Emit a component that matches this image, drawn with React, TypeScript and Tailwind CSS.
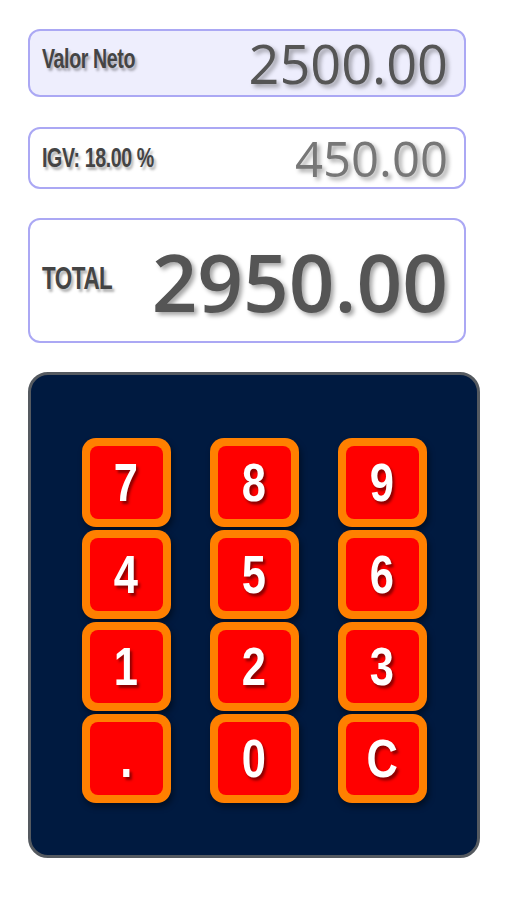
const sans = { fontFamily: '"Liberation Sans", Arial, sans-serif' };
const digits = { fontFamily: '"Open Sans", "DejaVu Sans", sans-serif' };

const keys = ["7", "8", "9", "4", "5", "6", "1", "2", "3", ".", "0", "C"];

function Key({ label }: { label: string }) {
  return (
    <div className="h-[89px] w-[89px] rounded-[14px] bg-[#ff8000] p-[8px] shadow-[2px_4px_6px_rgba(0,0,0,0.45)]">
      <div className="flex h-full w-full items-center justify-center rounded-[8px] bg-[#ff0000]">
        <span
          className="inline-block scale-x-[0.82] text-[53px] font-bold leading-none text-white [text-shadow:3px_3px_3px_rgba(110,0,0,0.8)]"
          style={sans}
        >
          {label}
        </span>
      </div>
    </div>
  );
}

export default function App() {
  return (
    <div className="flex w-[507px] flex-col bg-white pb-[42px] pl-[28px] pt-[29px]">
      {/* Valor neto */}
      <div className="flex h-[68px] w-[438px] items-center justify-between rounded-[12px] border-2 border-[#aba8f4] bg-[#eeeefd] pl-[12px] pr-[16px]">
        <span
          className="-mt-[8px] inline-block origin-left scale-x-[0.7] whitespace-nowrap text-[28px] font-bold tracking-[-0.02em] text-[#444] [text-shadow:3px_3px_3px_rgba(0,0,0,0.3)]"
          style={sans}
        >
          Valor Neto
        </span>
        <span
          className="text-[54px] font-medium leading-none text-[#555] [text-shadow:3px_3px_4px_rgba(0,0,0,0.35)]"
          style={digits}
        >
          2500.00
        </span>
      </div>

      {/* IGV */}
      <div className="mt-[30px] flex h-[62px] w-[438px] items-center justify-between rounded-[12px] border-2 border-[#aba8f4] bg-white pl-[12px] pr-[16px]">
        <span
          className="inline-block origin-left scale-x-[0.7] whitespace-nowrap text-[28px] font-bold tracking-[-0.02em] text-[#444] [text-shadow:3px_3px_3px_rgba(0,0,0,0.3)]"
          style={sans}
        >
          IGV: 18.00 %
        </span>
        <span
          className="text-[49px] font-medium leading-none text-[#777] [text-shadow:3px_3px_4px_rgba(0,0,0,0.35)]"
          style={digits}
        >
          450.00
        </span>
      </div>

      {/* Total */}
      <div className="mt-[29px] flex h-[125px] w-[438px] items-center justify-between rounded-[12px] border-2 border-[#aba8f4] bg-white pl-[12px] pr-[16px]">
        <span
          className="-mt-[6px] inline-block origin-left scale-x-[0.7] whitespace-nowrap text-[32px] font-bold tracking-[-0.02em] text-[#444] [text-shadow:3px_3px_3px_rgba(0,0,0,0.3)]"
          style={sans}
        >
          TOTAL
        </span>
        <span
          className="text-[80px] font-semibold leading-none text-[#555] [text-shadow:3px_3px_4px_rgba(0,0,0,0.35)]"
          style={digits}
        >
          2950.00
        </span>
      </div>

      {/* Keypad */}
      <div className="mt-[29px] flex h-[486px] w-[452px] justify-center rounded-[20px] border-[3px] border-[#555a60] bg-[#001a40] pt-[63px]">
        <div className="grid h-fit grid-cols-[89px_89px_89px] gap-x-[39px] gap-y-[3px]">
          {keys.map((k) => (
            <Key key={k} label={k} />
          ))}
        </div>
      </div>
    </div>
  );
}
